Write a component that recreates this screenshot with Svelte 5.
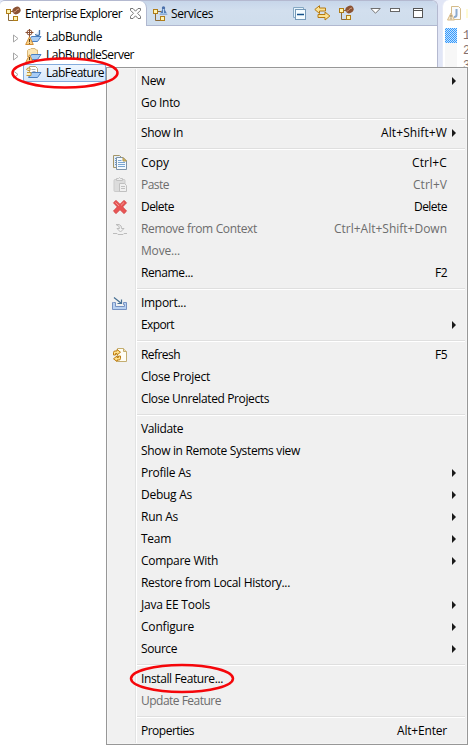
<script>
  const groups = [
    [{ t: 'New', w: 24, sub: true }, { t: 'Go Into', w: 39 }],
    [{ t: 'Show In', w: 42, key: 'Alt+Shift+W', kw: 66, sub: true }],
    [
      { t: 'Copy', w: 28, key: 'Ctrl+C', kw: 35, icon: 'copy' },
      { t: 'Paste', w: 28, key: 'Ctrl+V', kw: 34, icon: 'paste', off: true },
      { t: 'Delete', w: 33, key: 'Delete', kw: 33, icon: 'delete' },
      { t: 'Remove from Context', w: 116, key: 'Ctrl+Alt+Shift+Down', kw: 113, icon: 'remove', off: true },
      { t: 'Move...', w: 39, off: true },
      { t: 'Rename...', w: 52, key: 'F2', kw: 12 }
    ],
    [{ t: 'Import...', w: 45, icon: 'import' }, { t: 'Export', w: 33, sub: true }],
    [
      { t: 'Refresh', w: 39, key: 'F5', kw: 12, icon: 'refresh' },
      { t: 'Close Project', w: 69 },
      { t: 'Close Unrelated Projects', w: 128 }
    ],
    [
      { t: 'Validate', w: 42 },
      { t: 'Show in Remote Systems view', w: 159 },
      { t: 'Profile As', w: 50, sub: true },
      { t: 'Debug As', w: 51, sub: true },
      { t: 'Run As', w: 37, sub: true },
      { t: 'Team', w: 30, sub: true },
      { t: 'Compare With', w: 77, sub: true },
      { t: 'Restore from Local History...', w: 149 },
      { t: 'Java EE Tools', w: 69, sub: true },
      { t: 'Configure', w: 53, sub: true },
      { t: 'Source', w: 36, sub: true }
    ],
    [{ t: 'Install Feature...', w: 82 }, { t: 'Update Feature', w: 80, off: true }],
    [{ t: 'Properties', w: 53, key: 'Alt+Enter', kw: 50 }]
  ];
  const projects = [
    { t: 'LabBundle', w: 56, kind: 'bundle' },
    { t: 'LabBundleServer', w: 88, kind: 'server' },
    { t: 'LabFeature', w: 58, kind: 'feature', selected: true }
  ];

  function fit(node, width) {
    const natural = node.getBoundingClientRect().width;
    node.style.letterSpacing = (width - natural) / node.textContent.length + 'px';
  }
</script>

{#snippet nodes()}
  <path d="M3.500 7v7.500h5M5 5.500h4.500" fill="none" stroke="#8c6a37" />
  <g fill="#fff3b0" stroke="#b07d18">
    <rect x="1.500" y="3.500" width="4" height="4" />
    <rect x="8.500" y="10.500" width="4" height="4" />
  </g>
{/snippet}

{#snippet bean()}
  <ellipse cx="11.500" cy="4.500" rx="4.200" ry="3.600" fill="#8b5233" transform="rotate(-25 11.500 4.500)" />
  <path d="M8.500 6.200c2 .5 2.500-3.200 5.500-3.200" fill="none" stroke="#d6a184" />
{/snippet}

{#snippet warn()}
  <path d="M4.500 7.800 8.300 15.500H.7z" fill="#fbd286" stroke="#d28d33" stroke-linejoin="round" />
  <path d="M4.500 10v3M4.500 13.800v1" stroke="#59401d" />
{/snippet}

<div class="screen">
  <section class="view">
    <header>
      <div class="tab active">
        <svg width="16" height="16">{@render nodes()}{@render bean()}</svg>
        <span class="label" use:fit={97}>Enterprise Explorer</span>
        <svg class="close" width="11" height="11"><path d="M.5.5h2.500l2.500 2.700L8 .5h2.500v1.800L7.500 5.300l3 3v2.200H8L5.500 7.800 3 10.500H.5V8.300l3-3-3-3z" fill="#fff" stroke="#777" /></svg>
      </div>
      <div class="tab">
        <svg width="17" height="16">
          {@render nodes()}
          <path d="m11.500 1.500 4 7h-8z" fill="#537cb4" />
          <path d="M8 7.500h7" stroke="#9bc0e5" /><circle cx="11.500" cy="2" r="1.700" fill="#4b70aa" /><path d="M11.500 3v4" stroke="#bad8f5" />
        </svg>
        <span class="label" use:fit={42}>Services</span>
      </div>
      <div class="tools">
        <svg width="14" height="14"><path d="M.5 10.500V.5h10v2M.5 10.500H2" fill="#e7f4fc" stroke="#86a9c4" /><rect x="2.500" y="2.500" width="10" height="10" fill="#f5fcff" stroke="#7599b8" /><path d="M4 7.500h7" stroke="#14508a" stroke-width="1.400" /></svg>
        <svg width="17" height="16" fill="#fbe294" stroke="#b57a12"><path d="M5.500.7.8 4.500l4.700 4V6h6V3h-6z" /><path d="m11 7 4.900 4-4.900 4v-2.500H4v-3h7z" /></svg>
        <svg width="16" height="16">{@render nodes()}{@render bean()}</svg>
        <svg class="menu-arrow" width="11" height="6"><path d="M.8.5h9.400L5.500 5.200z" fill="#fff" stroke="#707070" /></svg>
        <svg class="min" width="10" height="4"><rect x=".5" y=".5" width="9" height="3" fill="#fff" stroke="#666" /></svg>
        <svg class="max" width="10" height="10"><rect x=".5" y=".5" width="9" height="9" fill="#fff" stroke="#555" /><path d="M1 2.500h8" stroke="#555" /></svg>
      </div>
    </header>
    <ul class="tree">
      {#each projects as p}
        <li>
          <svg class="twisty" width="6" height="9"><path d="M.5 1v7l4.500-3.500z" fill="#fff" stroke="#a6a6a6" /></svg>
          <div class="node" class:selected={p.selected}>
            <svg width="17" height="16">
              {#if p.kind === 'server'}
                <path d="M2.500 10V3.500l1-1H5l1-1h4l1 1.500h1.500v5" fill="#fbe6b5" stroke="#d9b678" />
              {:else if p.kind === 'feature'}
                <path d="M4.500 8V1.500h6l2 2V8" fill="#fff" stroke="#b9a477" />
              {/if}
              <path d="M3.500 12.500 6.500 7.500h9.500l-3.500 5z" fill="#a9cdf5" stroke="#4a7fc0" stroke-linejoin="round" />
              {#if p.kind === 'bundle'}
                <path d="M4.500 0v8M.5 3.500h8" stroke="#8b5135" /><circle cx="4.500" cy="3.500" r="2.500" fill="none" stroke="#8b5135" />
                <path d="M14.500 1v4q0 1.500-2 1.500t-2-1.500" fill="#dceafa" stroke="#4674a9" stroke-width="1.300" />
              {/if}
              {#if p.kind === 'feature'}
                <path d="M1.500 5Q2 2 5 3v2.500H2.500M2 7.500h4v3H1.500" fill="#fff0b8" stroke="#c0963e" />
                <path d="M6.500 4.500h4M7.500 6.500h3" stroke="#a7adb8" />
              {:else}
                {@render warn()}
              {/if}
            </svg>
            <span class="label" use:fit={p.w}>{p.t}</span>
          </div>
        </li>
      {/each}
    </ul>
  </section>

  <section class="editor">
    <div class="editor-tab">
      <svg width="15" height="16"><path d="M4.500.5h7l2 2v11h-9z" fill="#fafbfc" stroke="#d5bc89" /><path d="M9.500 3v6q0 2-2.500 2" fill="none" stroke="#8baace" stroke-width="2" /><path d="m4 7 3.500 7H.5z" fill="#f8ebd0" stroke="#d7b887" /><path d="M4 9v2.500M4 12.300v1" stroke="#807050" /></svg>
      <i></i>
    </div>
    <div class="code">
      <div class="ruler"><i></i></div>
      <div class="lines"><span>1</span><span>2</span><span>3</span></div>
    </div>
  </section>

  <div class="menu">
    {#each groups as group}
      <div class="group">
        {#each group as item}
          <div class="item" class:off={item.off}>
            <div class="icon">
              {#if item.icon === 'copy'}
                <svg width="16" height="16"><path d="M1.500.5h6l2 2v10h-8z" fill="#e4eef8" stroke="#a49668" /><path d="M3 3.500h2m-2 2h2m-2 2h2m-2 2h2" stroke="#6c98c6" /><path d="M4.500 2.500h6.500l3.500 3.500v8.500h-10z" fill="#f4faff" stroke="#7d93a8" /><path d="M11 2.500v3.500h3.500z" fill="#ddc06e" stroke="#b09650" /><path d="M6 5.500h3.500m-3.500 2h7m-7 2h7m-7 2h7" stroke="#7aa5d0" /></svg>
              {:else if item.icon === 'paste'}
                <svg width="16" height="16"><rect x="2" y="2.500" width="11" height="12" rx="1" fill="#dcdcdc" stroke="#cbcbcb" /><path d="M4.500 3.500h6v-2h-2l-1-1-1 1h-2z" fill="#eee" stroke="#c2c2c2" /><path d="M7.500 6.500h5l2 2v6h-7z" fill="#f0f0f0" stroke="#c0c0c0" /><path d="M9 9.500h4m-4 2h4" stroke="#c0c0c0" /></svg>
              {:else if item.icon === 'delete'}
                <svg width="16" height="16"><path d="M4 1.500 8 5.400l4-3.900 2.500 2.300-3.900 4.100 3.900 4.200-2.500 2.400L8 10.600l-4 3.900-2.500-2.400 3.900-4.200-3.900-4.100z" fill="#e95454" stroke="#d64343" stroke-linejoin="round" /><path d="m3.500 3.500 3.500 3.400M12 3.500 9 6.400" stroke="#f49b94" /></svg>
              {:else if item.icon === 'remove'}
                <svg width="16" height="16" fill="none" stroke="#bcbcbc"><path d="M4 3.500h3q3 1 2.500 4h2.500L8.500 11 5 7.500h2.500Q8 5 4 3.500zM1 12.500h4m7 0h3M5 12.500l1 1h5l1-1" /></svg>
              {:else if item.icon === 'import'}
                <svg width="17" height="16"><path d="M1.500 7.500h2v4h9v-2h-1v-2h3v7h-14v-7z" fill="#b8d1f1" stroke="#7792c2" /><path d="m2 2.500 7.500 6M9.500 4.500v4h-4" fill="none" stroke="#477094" stroke-width="1.200" /></svg>
              {:else if item.icon === 'refresh'}
                <svg width="16" height="16"><path d="M5.500 1.500h6l3 3v10h-9z" fill="#fffdf3" stroke="#c3ad70" /><path d="M11.500 1.500v3h3" fill="#f1dfab" stroke="#c3ad70" /><g fill="#ffe08a" stroke="#bd7c10"><path d="M1.500 8V5.500q0-1.500 1.500-1.500h2V2.500L8.500 5.200 5 8V6.500H3.500V8z" /><path d="M8.500 9v2.500Q8.500 13 7 13H5v1.500L1.500 11.800 5 9v1.500h1.500V9z" /></g></svg>
              {/if}
            </div>
            <div class="text"><span class="label" use:fit={item.w}>{item.t}</span></div>
            {#if item.key}<div class="key"><span class="label" use:fit={item.kw}>{item.key}</span></div>{/if}
            <div class="sub">
              {#if item.sub}<svg width="4" height="8"><path d="M0 0v8l4-4z" fill="#1a1a1a" /></svg>{/if}
            </div>
          </div>
        {/each}
      </div>
    {/each}
  </div>

  <svg class="marks" width="468" height="745" fill="none" stroke="#f5060a" stroke-width="2.500">
    <ellipse cx="65" cy="73" rx="52.500" ry="14.500" />
    <ellipse cx="182" cy="678.500" rx="51" ry="13.500" />
  </svg>
</div>

<style>
  .screen {
    position: relative;
    display: flex;
    width: 468px;
    height: 745px;
    overflow: hidden;
    background: #e1e6f6;
    font: 12px/22px 'Open Sans', 'Noto Sans', sans-serif;
    color: #000;
  }
  svg { display: block; flex: none; }
  .label { display: inline-block; white-space: nowrap; }
  .view {
    box-sizing: border-box;
    flex: none;
    width: 438px;
    background: #fff;
    border-top: 1px solid #b4b9d0;
    border-right: 1px solid #b4b9d0;
    border-radius: 5px 6px 0 0;
    overflow: hidden;
  }
  header {
    display: flex;
    box-sizing: border-box;
    height: 25px;
    background: linear-gradient(#c7d6ea, #d2dfee 40%, #cfddec);
    border-bottom: 1px solid #b0b8d0;
  }
  .tab { display: flex; align-items: center; height: 25px; padding-left: 5px; }
  .tab .label { margin-left: 2px; padding-top: 1px; }
  .tab.active {
    box-sizing: border-box;
    width: 147px;
    height: 25px;
    padding-left: 5px;
    background: #fff;
    border-right: 1px solid #b0b8d0;
    border-radius: 0 7px 0 0;
  }
  .tab.active .label { margin-left: 4px; }
  .tab .close { margin-left: 8px; }
  .tools { display: flex; align-items: flex-start; margin-left: auto; padding: 4px 14px 0 0; }
  .tools svg { margin-right: 7px; }
  .tools svg:first-child { margin-top: 2px; }
  .tools .menu-arrow { margin: 3px 9px 0 9px; }
  .tools .min { margin: 3px 13px 0 0; }
  .tools .max { margin: 3px 0 0; }
  .tree { margin: 2px 0 0; padding: 0 0 0 13px; list-style: none; line-height: 18px; }
  .tree li { display: flex; align-items: center; height: 18px; }
  .twisty { margin-top: 2px; }
  .tree .node {
    display: flex;
    align-items: center;
    box-sizing: border-box;
    height: 18px;
    margin-left: 4px;
    padding: 0 1px;
    border: 1px solid transparent;
    border-radius: 2px;
  }
  .node.selected { background: linear-gradient(#eff6fe, #d5e8fc); border-color: #84acdd; }
  .node .label { margin-left: 4px; line-height: 16px; }
  .editor {
    box-sizing: border-box;
    flex: 1;
    min-width: 0;
    margin-left: 4px;
    background: #fff;
    border-left: 1px solid #e8ebf7;
    border-radius: 7px 0 0 0;
  }
  .editor-tab { display: flex; justify-content: space-between; height: 28px; padding: 6px 0 0 4px; box-sizing: border-box; }
  .editor-tab i { width: 2px; height: 9px; margin-top: 3px; background: #fffbd6; }
  .code { display: flex; padding-left: 2px; }
  .ruler { flex: none; width: 12px; height: 717px; background: #f7f7f7; }
  .ruler i {
    display: block;
    height: 15px;
    background: repeating-conic-gradient(#3399ff 0 25%, #c6e2fc 0 50%) 0 0 / 2px 2px;
  }
  .lines { display: flex; flex-direction: column; padding: 1px 0 0 6px; color: #85706d; font: 12px/15px 'Liberation Mono', monospace; }
  .menu {
    position: absolute;
    left: 106px;
    top: 67px;
    box-sizing: border-box;
    width: 362px;
    height: 678px;
    padding: 2px;
    border: 1px solid #979797;
    background: linear-gradient(90deg, #f1f1f1 29px, #e2e3e3 29px 30px, #fff 30px 31px, #f0f0f0 31px);
    background-origin: border-box;
    box-shadow: inset 0 0 0 1px #f5f5f5;
  }
  .group + .group::before {
    content: '';
    display: block;
    height: 1px;
    margin: 4px 0 2px 28px;
    background: #dfdfdf;
    border-bottom: 1px solid #fff;
  }
  .item { display: flex; align-items: center; height: 22px; }
  .item.off { color: #6d6d6d; }
  .icon { width: 28px; padding-left: 3px; box-sizing: border-box; }
  .text { flex: 1; padding-left: 4px; }
  .sub { width: 18px; padding-left: 5px; box-sizing: border-box; }
  .marks { position: absolute; left: 0; top: 0; pointer-events: none; }
</style>
